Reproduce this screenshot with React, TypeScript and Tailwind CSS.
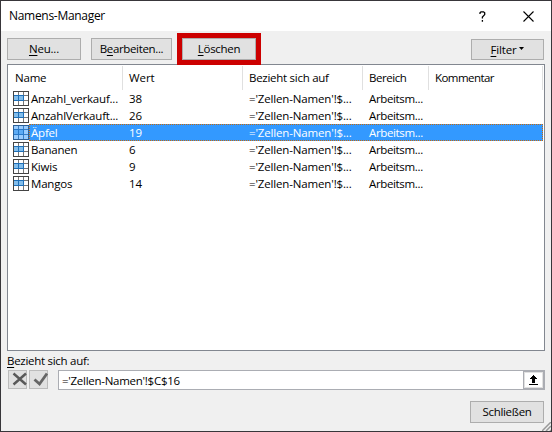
import type { ReactNode } from 'react';

const columns = [
  { label: 'Name', spacing: 'tracking-[-0.2px]' },
  { label: 'Wert', spacing: 'tracking-[-0.1px]' },
  { label: 'Bezieht sich auf', spacing: 'tracking-[-0.27px]' },
  { label: 'Bereich', spacing: 'tracking-[-0.45px]' },
  { label: 'Kommentar', spacing: 'tracking-[-0.55px]' },
];

const names = [
  { name: 'Anzahl_verkauf...', value: '38' },
  { name: 'AnzahlVerkauft...', value: '26' },
  { name: 'Äpfel', value: '19', selected: true },
  { name: 'Bananen', value: '6' },
  { name: 'Kiwis', value: '9' },
  { name: 'Mangos', value: '14' },
];

const gridCols = 'grid grid-cols-[115px_120px_120px_66px_114px]';

function Key({ children }: { children: ReactNode }) {
  return <span className="underline decoration-1 underline-offset-2">{children}</span>;
}

function Button({ className, children }: { className: string; children: ReactNode }) {
  return (
    <button
      className={`flex items-center justify-center border border-[#adadad] bg-[#e1e1e1] leading-4 ${className}`}
    >
      {children}
    </button>
  );
}

function TableIcon({ selected }: { selected?: boolean }) {
  const frame = selected ? '#2c5f96' : '#444444';
  const line = selected ? '#3b7fc4' : '#777777';
  return (
    <svg width="16" height="15" viewBox="0 0 16 15" shapeRendering="crispEdges" className="shrink-0">
      <rect width="16" height="15" fill={frame} />
      <rect x="1" y="1" width="14" height="13" fill={selected ? '#99ccff' : '#ffffff'} />
      <path d="M5 1h1v13h-1zM10 1h1v13h-1zM1 4h14v1H1zM1 9h14v1H1z" fill={line} />
      <rect x="1" y="4" width="10" height="6" fill={selected ? '#2878c8' : '#1e6fb8'} />
      <path d="M1 5h4v4H1zM6 5h4v4H6z" fill={selected ? '#5cabf5' : '#83beec'} />
    </svg>
  );
}

export default function App() {
  return (
    <div className="flex h-[432px] w-[552px] flex-col overflow-hidden border border-[#38363a] bg-[#f0f0f0] font-['Open_Sans','Noto_Sans',sans-serif] text-[11.5px] leading-4 tracking-[-0.2px] text-black">
      <header className="flex h-[30px] shrink-0 items-center bg-white pl-2">
        <h1 className="flex-1 text-[12px] tracking-[-0.3px]">Namens-Manager</h1>
        <svg width="7" height="11" viewBox="0 0 7 11" className="mr-[37px]">
          <path d="M1 3V1.800L2 .8h2.500l1.200 1V3.600L3.400 6v1.600M3.400 9v1.700" fill="none" stroke="#000" strokeWidth="1.3" />
        </svg>
        <svg width="11" height="11" viewBox="0 0 11 11" className="mr-[17px]">
          <path d="M.5.5l10 10M10.5.5l-10 10" stroke="#000" strokeWidth="1.1" />
        </svg>
      </header>

      <div className="flex h-[33px] shrink-0 items-start pl-1.5">
        <Button className="mt-[7px] h-[22px] w-[74px] pb-px"><span><Key>N</Key>eu...</span></Button>
        <Button className="mt-[7px] ml-2.5 h-[22px] w-[81px] pb-px tracking-[-0.35px]"><span>B<Key>e</Key>arbeiten...</span></Button>
        <div className="relative z-10 mt-0.5 ml-[5px] h-8 w-[84px] border-5 border-[#cc0000]">
          <Button className="h-[22px] w-[74px] pb-px tracking-[-0.3px]"><span><Key>L</Key>öschen</span></Button>
        </div>
        <Button className="mt-2 ml-[210px] h-[21px] w-[73px]">
          <span><Key>F</Key>ilter</span>
          <svg width="5" height="3" viewBox="0 0 5 3" className="-mt-0.5 ml-[3px]"><path d="M0 0h5L2.5 3z" /></svg>
        </Button>
      </div>

      <div className="ml-1.5 h-[287px] w-[538px] shrink-0 border border-[#828790] bg-white">
        <div className={`${gridCols} mt-px h-6 items-center`}>
          {columns.map(({ label, spacing }, i) => (
            <div key={label} className={`flex h-6 items-center border-r border-[#e0e0e0] whitespace-nowrap ${spacing} ${i ? 'pl-1.5' : 'pl-[7px]'}`}>
              {label}
            </div>
          ))}
        </div>
        {names.map((row) => (
          <div key={row.name} className="flex h-[17px] items-center pl-[5px]">
            <TableIcon selected={row.selected} />
            <div className={`grid h-[17px] w-[514px] grid-cols-[92px_120px_120px_66px_auto] items-center border border-dotted pb-px whitespace-nowrap ${row.selected ? 'border-[#c8690a] bg-[#3399ff] text-white' : 'border-transparent'}`}>
              <span className="pl-px">{row.name}</span>
              <span className="pl-[7px]">{row.value}</span>
              <span className="pl-[7px] tracking-[-0.15px]">='Zellen-Namen'!$...</span>
              <span className="pl-[7px] tracking-[-0.35px]">Arbeitsm...</span>
            </div>
          </div>
        ))}
      </div>

      <div className="h-[19px] shrink-0 pt-0.5 pl-1.5 tracking-[-0.28px]"><Key>B</Key>ezieht sich auf:</div>
      <div className="flex h-5 shrink-0 pl-[7px]">
        <button className="h-[19px] w-[19px] border border-[#bcbcbc] bg-[#e1e1e1]">
          <svg width="18" height="17" viewBox="0 0 18 17" className="max-w-none">
            <path d="M4.500 2.500L17 13.500M17 2.500L4.500 13.500" stroke="#595959" strokeWidth="2.4" />
          </svg>
        </button>
        <button className="ml-0.5 h-[19px] w-[19px] border border-[#bcbcbc] bg-[#e1e1e1]">
          <svg width="18" height="17" viewBox="0 0 18 17" className="max-w-none">
            <path d="M4.500 8.500l5 4.500 7.500-10.500" fill="none" stroke="#666" strokeWidth="2.8" />
          </svg>
        </button>
        <div className="ml-2.5 flex h-5 w-[487px] border border-[#abadb3] bg-white">
          <span className="flex flex-1 items-center pt-px pl-[3px] tracking-[-0.27px]">='Zellen-Namen'!$C$16</span>
          <button className="flex h-[18px] w-[21px] items-center justify-center border border-[#abadb3] bg-white shadow-[inset_0_0_0_1px_#e1e1e1]">
            <svg width="9" height="10" viewBox="0 0 9 10" shapeRendering="crispEdges">
              <path d="M4 0h1v1h1v1h1v1h1v1H6v4H3V4H1V3h1V2h1V1h1zM0 9h9v1H0z" />
            </svg>
          </button>
        </div>
      </div>
      <div className="flex flex-1 justify-end pt-[11px]">
        <Button className="mr-[5px] h-[22px] w-[74px] pb-px tracking-[-0.3px]">Schließen</Button>
        <svg width="9" height="9" viewBox="0 0 9 9" className="-ml-[7px] self-end">
          <path d="M0 9L9 0M4 9l5-5M8 9l1-1" stroke="#999" strokeWidth="1.5" />
        </svg>
      </div>
    </div>
  );
}
